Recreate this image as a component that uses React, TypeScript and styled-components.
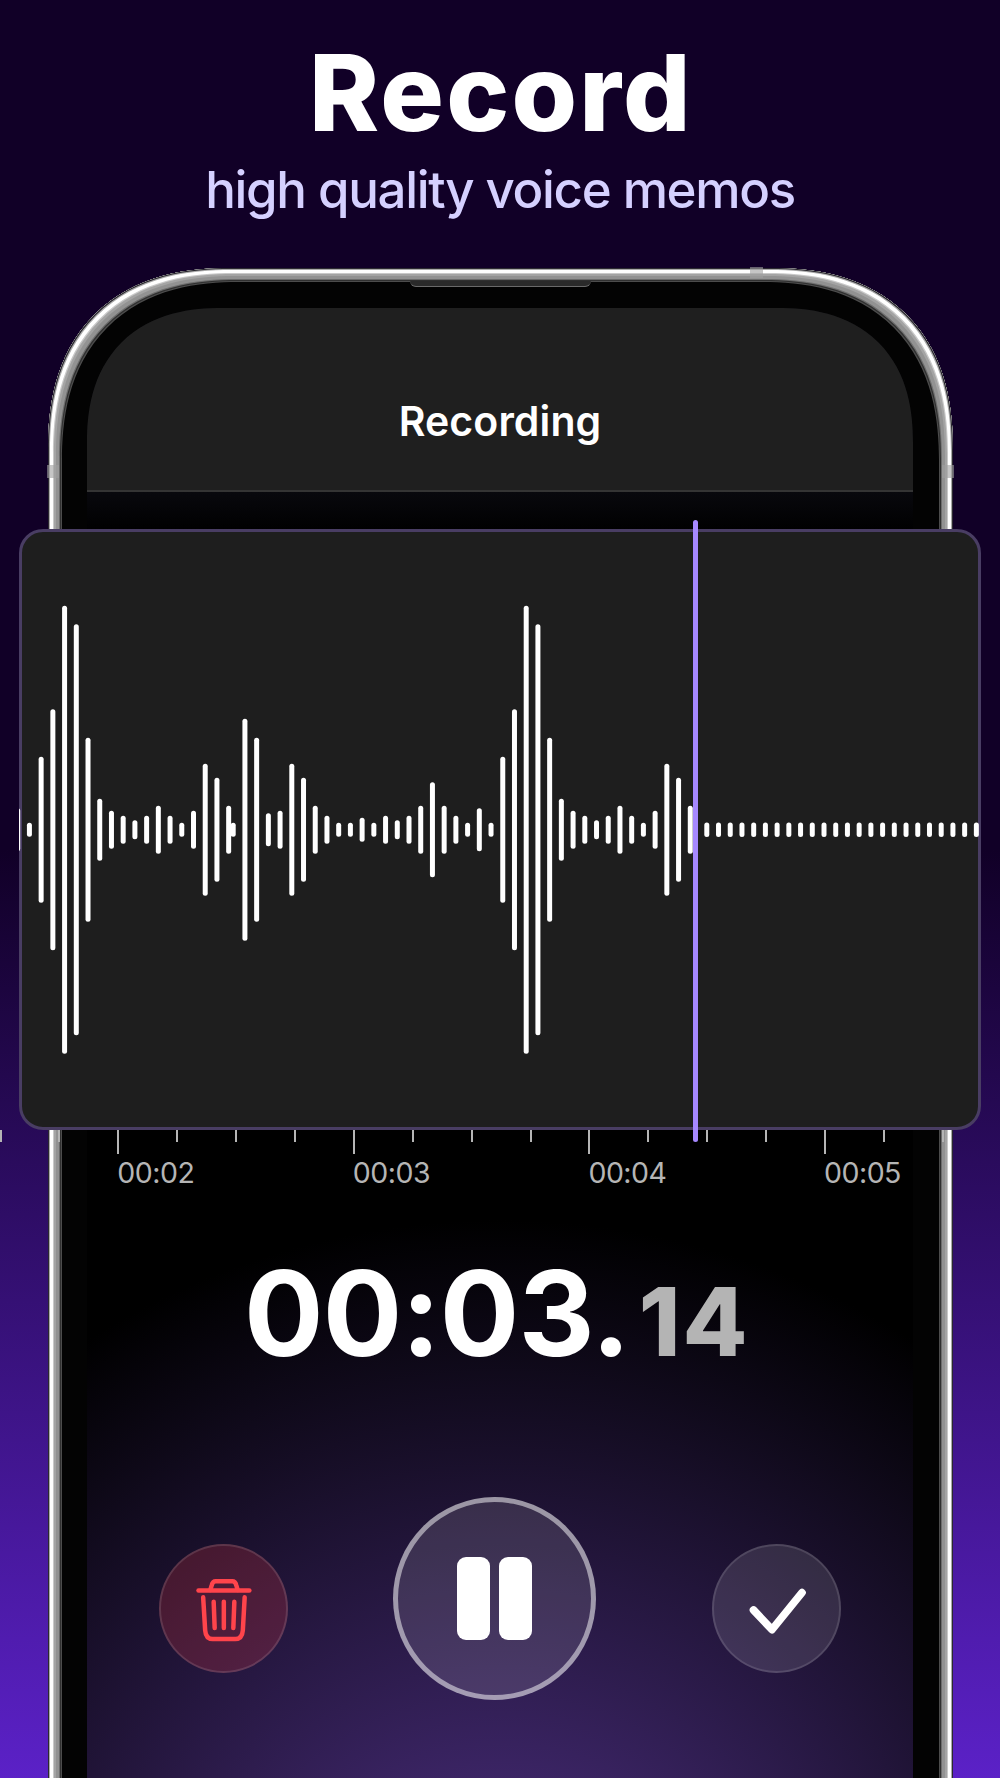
import styled, { createGlobalStyle } from "styled-components";

const spoken = [
  14, 222, 184, 33, 38, 132, 104, 48, 28, 14, 14, 24, 14, 28, 19, 28, 48, 95,
  48, 28, 14, 43, 14, 146, 241, 448, 411, 184, 62, 38, 28, 19, 28, 48, 28, 14,
  38, 132, 104, 48,
];
const opening = [
  43, 14, 146, 241, 448, 411, 184, 62, 38, 28, 19, 28, 48, 28, 14, 38, 132,
  104, 48,
];
const silence = Array<number>(24).fill(14.4);

const STEP = 11.72;
const waves = [
  { start: -1.3, bars: opening },
  { start: 214.2, bars: spoken },
  { start: 687.8, bars: silence },
];

const ticks = Array.from({ length: 17 }, (_, i) => ({
  major: i % 4 === 2,
  label: i % 4 === 2 ? `00:0${(i - 2) / 4 + 2}` : "",
}));

function Waveform() {
  return (
    <WaveSvg viewBox="0 0 959.5 601">
      {waves.map((wave) =>
        wave.bars.map((height, index) => (
          <rect
            key={`${wave.start}-${index}`}
            x={wave.start + index * STEP - 2.5}
            y={300.8 - height / 2}
            width={5}
            height={height}
            rx={2.5}
            fill="white"
          />
        ))
      )}
    </WaveSvg>
  );
}

function TrashIcon() {
  return (
    <svg width="56" height="64" viewBox="0 0 168 192" fill="none">
      <g
        stroke="#ff444b"
        strokeWidth="13.5"
        strokeLinecap="round"
        strokeLinejoin="round"
      >
        <path d="M7.5 37.5H160" />
        <path d="M43 36L47 22Q50 10 59 10H109Q118 10 121 22L125 36" />
        <path d="M21.5 58L27.5 157Q29.5 183 50 183H118Q138.5 183 140.5 157L146 58" />
        <path d="M53 71.5L56 150M83.5 71.5V150M115 71.5L112 150" />
      </g>
    </svg>
  );
}

function CheckIcon() {
  return (
    <svg width="58" height="48" viewBox="0 0 174 144" fill="none">
      <path
        d="M16.5 72L72 131L162 20"
        stroke="white"
        strokeWidth="23"
        strokeLinecap="round"
        strokeLinejoin="round"
      />
    </svg>
  );
}

export default function App() {
  return (
    <>
      <GlobalStyle />
      <Page>
        <Hero>
          <h1>Record</h1>
          <p>high quality voice memos</p>
        </Hero>
        <Phone>
          <Speaker />
          <Antenna $side="top" />
          <Antenna $side="left" />
          <Antenna $side="right" />
          <Screen>
            <Header>Recording</Header>
            <WaveCard>
              <Waveform />
              <Playhead />
            </WaveCard>
            <Ruler>
              {ticks.map((tick, index) => (
                <Tick key={index} $major={tick.major}>
                  {tick.label && <span>{tick.label}</span>}
                </Tick>
              ))}
            </Ruler>
            <Timer>
              <Seconds>00:03.</Seconds>
              <Hundredths>14</Hundredths>
            </Timer>
            <Controls>
              <RoundButton $danger aria-label="Delete">
                <TrashIcon />
              </RoundButton>
              <PauseButton aria-label="Pause">
                <PauseBar />
                <PauseBar />
              </PauseButton>
              <RoundButton aria-label="Done">
                <CheckIcon />
              </RoundButton>
            </Controls>
          </Screen>
        </Phone>
      </Page>
    </>
  );
}

const GlobalStyle = createGlobalStyle`
  * {
    box-sizing: border-box;
    margin: 0;
    padding: 0;
  }
  body {
    background-color: #110027;
    font-family: Inter, "Liberation Sans", sans-serif;
  }
`;

const Page = styled.main`
  width: 1000px;
  height: 1778px;
  overflow: hidden;
  background: linear-gradient(180deg, #110027 0, #110027 850px, #5b21c7 1778px);
`;

const Hero = styled.header`
  height: 268px;
  padding-top: 31px;
  text-align: center;
  & > h1 {
    padding-left: 2px;
    color: white;
    font-size: 106px;
    font-weight: 800;
    line-height: 124px;
    letter-spacing: 2.2px;
  }
  & > p {
    margin-top: 3px;
    color: #d5d0ff;
    font-size: 51px;
    font-weight: 500;
    line-height: 64px;
    letter-spacing: -1.32px;
  }
`;

const Phone = styled.section`
  position: relative;
  width: 905px;
  height: 1560px;
  margin-left: 48px;
  padding: 40px 40px 0 39px;
  border-radius: 157px 157px 0 0;
  background-color: #030303;
  box-shadow: inset 0 0 0 1px #2b2930, inset 0 0 0 2px #a9a9a9,
    inset 0 0 0 5px #ffffff, inset 0 0 0 6px #c9c9c9, inset 0 0 0 8px #a4a4a4,
    inset 0 0 0 11px #929292, inset 0 0 0 12px #6d6d6d,
    inset 0 0 0 13px #303030, inset 0 0 0 14px #4c4c4c;
  @supports (corner-shape: squircle) {
    border-radius: 182px 182px 0 0;
    corner-shape: superellipse(1.23);
  }
`;

const Speaker = styled.div`
  position: absolute;
  top: 13px;
  left: 362px;
  width: 181px;
  height: 6px;
  border-radius: 0 0 6px 6px;
  border-bottom: 1px solid #6a6a6a;
  background-color: #2a2a2a;
`;

const Antenna = styled.div<{ $side: "top" | "left" | "right" }>`
  position: absolute;
  width: ${(props) => (props.$side === "top" ? 13 : 12)}px;
  height: ${(props) => (props.$side === "top" ? 11 : 13)}px;
  top: ${(props) => (props.$side === "top" ? -1 : 197)}px;
  ${(props) => props.$side === "top" && "left: 702px;"}
  ${(props) => props.$side === "left" && "left: -1px;"}
  ${(props) => props.$side === "right" && "right: -1px;"}
  background-color: rgba(160, 160, 160, 0.6);
`;

const Screen = styled.div`
  height: 1520px;
  display: flex;
  flex-direction: column;
  border-radius: 115px 115px 0 0;
  background: linear-gradient(#08080d 184px, rgba(0, 0, 0, 0) 225px),
    radial-gradient(circle 770px at 413px 1682px, #51328a, #000000);
  @supports (corner-shape: squircle) {
    border-radius: 135px 135px 0 0;
    corner-shape: superellipse(1.23);
  }
`;

const Header = styled.div`
  height: 184px;
  padding-top: 88px;
  border-bottom: 2px solid #343434;
  border-radius: 115px 115px 0 0;
  background-color: #1f1f1f;
  color: white;
  font-size: 41px;
  font-weight: 600;
  line-height: 50px;
  letter-spacing: 0.1px;
  text-align: center;
  @supports (corner-shape: squircle) {
    border-radius: 135px 135px 0 0;
    corner-shape: superellipse(1.23);
  }
`;

const WaveCard = styled.div`
  position: relative;
  height: 601px;
  margin: 37px -68px 0;
  border: 3px solid #493d63;
  border-radius: 24px;
  background-color: #1e1e1e;
`;

const WaveSvg = styled.svg`
  display: block;
  width: 959.5px;
  height: 601px;
  margin: -3px;
`;

const Playhead = styled.div`
  position: absolute;
  top: -12px;
  left: 670.5px;
  width: 5px;
  height: 622px;
  border-radius: 3px;
  background-color: #a688ff;
`;

const Ruler = styled.div`
  height: 60px;
  margin: 0 -87px 0 -87.5px;
  display: flex;
`;

const Tick = styled.div<{ $major: boolean }>`
  flex: 0 0 58.9px;
  min-width: 0;
  &::before {
    content: "";
    display: block;
    width: 2px;
    height: ${(props) => (props.$major ? 24 : 12)}px;
    background-color: #b5b5b5;
  }
  & > span {
    display: block;
    margin-top: 1px;
    color: #b5b5b5;
    font-size: 28.5px;
    line-height: 36px;
    letter-spacing: -0.5px;
  }
`;

const Timer = styled.div`
  height: 144px;
  margin: 51px 0 0 157px;
  display: flex;
  align-items: baseline;
  font-weight: 700;
  line-height: 144px;
`;

const Seconds = styled.span`
  color: white;
  font-size: 118px;
  letter-spacing: -0.9px;
  font-feature-settings: "calt" 0;
`;

const Hundredths = styled.span`
  margin-left: 9px;
  color: #b4b4b4;
  font-size: 94.5px;
  font-weight: 800;
  letter-spacing: 2px;
`;

const Controls = styled.div`
  margin-top: 112px;
  padding-left: 72px;
  display: flex;
  align-items: flex-start;
`;

const RoundButton = styled.button<{ $danger?: boolean }>`
  width: 129px;
  height: 129px;
  margin-top: 47px;
  display: flex;
  align-items: center;
  justify-content: center;
  border: 2px solid rgba(255, 255, 255, 0.12);
  border-radius: 50%;
  background-color: ${(props) =>
    props.$danger ? "rgba(255, 66, 70, 0.2)" : "rgba(255, 255, 255, 0.12)"};
  & > svg {
    margin-top: 3px;
    overflow: visible;
  }
`;

const PauseButton = styled.button`
  width: 203px;
  height: 203px;
  margin: 0 116px 0 105px;
  display: flex;
  align-items: center;
  justify-content: center;
  gap: 9px;
  border: 5px solid rgba(255, 255, 255, 0.5);
  border-radius: 50%;
  background-color: rgba(255, 255, 255, 0.12);
`;

const PauseBar = styled.div`
  width: 33px;
  height: 83px;
  border-radius: 9px;
  background-color: white;
`;
